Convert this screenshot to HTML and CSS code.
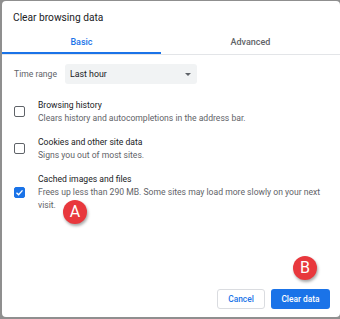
FILE: index.html
```html
<!DOCTYPE html>
<html lang="en">
<head>
<meta charset="utf-8">
<title>Clear browsing data</title>
<link rel="stylesheet" href="styles.css">
</head>
<body>
<div class="dialog">
  <div class="title">Clear browsing data</div>
  <div class="tabs">
    <div class="tab tab-basic active">Basic</div>
    <div class="tab tab-adv">Advanced</div>
  </div>
  <div class="range">
    <span class="range-label">Time range</span>
    <div class="select">
      <span>Last hour</span>
      <span class="arrow"></span>
    </div>
  </div>
  <div class="items">
    <div class="item">
      <span class="cb"></span>
      <div class="item-text">
        <div class="item-title">Browsing history</div>
        <div class="item-sub">Clears history and autocompletions in the address bar.</div>
      </div>
    </div>
    <div class="item">
      <span class="cb"></span>
      <div class="item-text">
        <div class="item-title">Cookies and other site data</div>
        <div class="item-sub">Signs you out of most sites.</div>
      </div>
    </div>
    <div class="item">
      <span class="cb checked">
        <svg viewBox="0 0 12 12" width="9" height="9"><path d="M2 6.2 L4.8 9 L10 3.2" fill="none" stroke="#fff" stroke-width="1.8"/></svg>
      </span>
      <div class="item-text">
        <div class="item-title">Cached images and files</div>
        <div class="item-sub">Frees up less than 290 MB. Some sites may load more slowly on your next visit.</div>
      </div>
    </div>
  </div>
  <div class="actions">
    <button class="btn btn-cancel">Cancel</button>
    <button class="btn btn-primary">Clear data</button>
  </div>
  <span class="badge badge-a">A</span>
  <span class="badge badge-b">B</span>
</div>
</body>
</html>
```
FILE: styles.css
```css
html, body {
  margin: 0;
  padding: 0;
}
body {
  width: 340px;
  height: 319px;
  background: #8f8f8f;
  font-family: Roboto, "Liberation Sans", sans-serif;
  overflow: hidden;
}
.dialog {
  position: relative;
  margin: 1px 0 0 2px;
  width: 338px;
  height: 316px;
  background: #fff;
  border-radius: 4px;
  box-sizing: border-box;
  display: flex;
  flex-direction: column;
}
.title {
  padding: 10px 12px 0 11px;
  font-size: 10.2px;
  line-height: 14px;
  color: #202124;
}
.tabs {
  display: flex;
  border-bottom: 1px solid #e3e5e8;
}
.tab {
  position: relative;
  text-align: center;
  padding: 10px 0 5px;
  font-size: 9px;
  line-height: 14px;
  font-weight: 500;
  color: #5f6368;
}
.tab-basic {
  width: 159px;
}
.tab-adv {
  flex: 1;
}
.tab.active {
  color: #1a73e8;
}
.tab.active::after {
  content: "";
  position: absolute;
  left: 0;
  right: 0;
  bottom: 0;
  height: 2px;
  background: #1a73e8;
}
.range {
  display: flex;
  align-items: center;
  margin-top: 9px;
  padding-left: 12px;
}
.range-label {
  font-size: 8.6px;
  color: #5f6368;
  width: 51px;
}
.select {
  width: 132px;
  height: 20px;
  box-sizing: border-box;
  background: #f1f3f4;
  border-radius: 3px;
  display: flex;
  align-items: center;
  justify-content: space-between;
  padding: 0 6px 0 5px;
  font-size: 8.8px;
  color: #202124;
}
.arrow {
  width: 0;
  height: 0;
  border-left: 3.5px solid transparent;
  border-right: 3.5px solid transparent;
  border-top: 3.5px solid #5f6368;
}
.items {
  display: flex;
  flex-direction: column;
  gap: 10px;
  margin-top: 14px;
  padding: 0 12px 0 12px;
}
.item {
  display: flex;
  align-items: center;
}
.cb {
  width: 11px;
  height: 11px;
  box-sizing: border-box;
  border: 1.7px solid #5f6368;
  border-radius: 2px;
  margin-right: 13px;
  flex: none;
  display: flex;
  align-items: center;
  justify-content: center;
}
.cb.checked {
  background: #1a73e8;
  border-color: #1a73e8;
}
.item-text {
  flex: 1;
}
.item-title {
  font-size: 8.6px;
  line-height: 14px;
  color: #202124;
}
.item-sub {
  font-size: 8.6px;
  line-height: 13px;
  color: #5f6368;
}
.actions {
  margin-top: auto;
  display: flex;
  justify-content: flex-end;
  gap: 6px;
  padding: 0 10px 8px 0;
}
.btn {
  height: 20px;
  box-sizing: border-box;
  border-radius: 3px;
  font-family: Roboto, "Liberation Sans", sans-serif;
  font-size: 8.4px;
  font-weight: 500;
  padding: 0;
  cursor: pointer;
}
.btn-cancel {
  width: 48px;
  background: #fff;
  color: #1a73e8;
  border: 1px solid #dadce0;
}
.btn-primary {
  width: 59px;
  background: #1a73e8;
  color: #fff;
  border: none;
}
.badge {
  position: absolute;
  width: 24px;
  height: 24px;
  border-radius: 50%;
  background: #e8383d;
  color: #fff;
  font-size: 16px;
  line-height: 24px;
  text-align: center;
  box-shadow: 1px 2px 3px rgba(0, 0, 0, 0.35);
}
.badge-a {
  left: 61px;
  top: 199px;
}
.badge-b {
  left: 291px;
  top: 255px;
}
```
